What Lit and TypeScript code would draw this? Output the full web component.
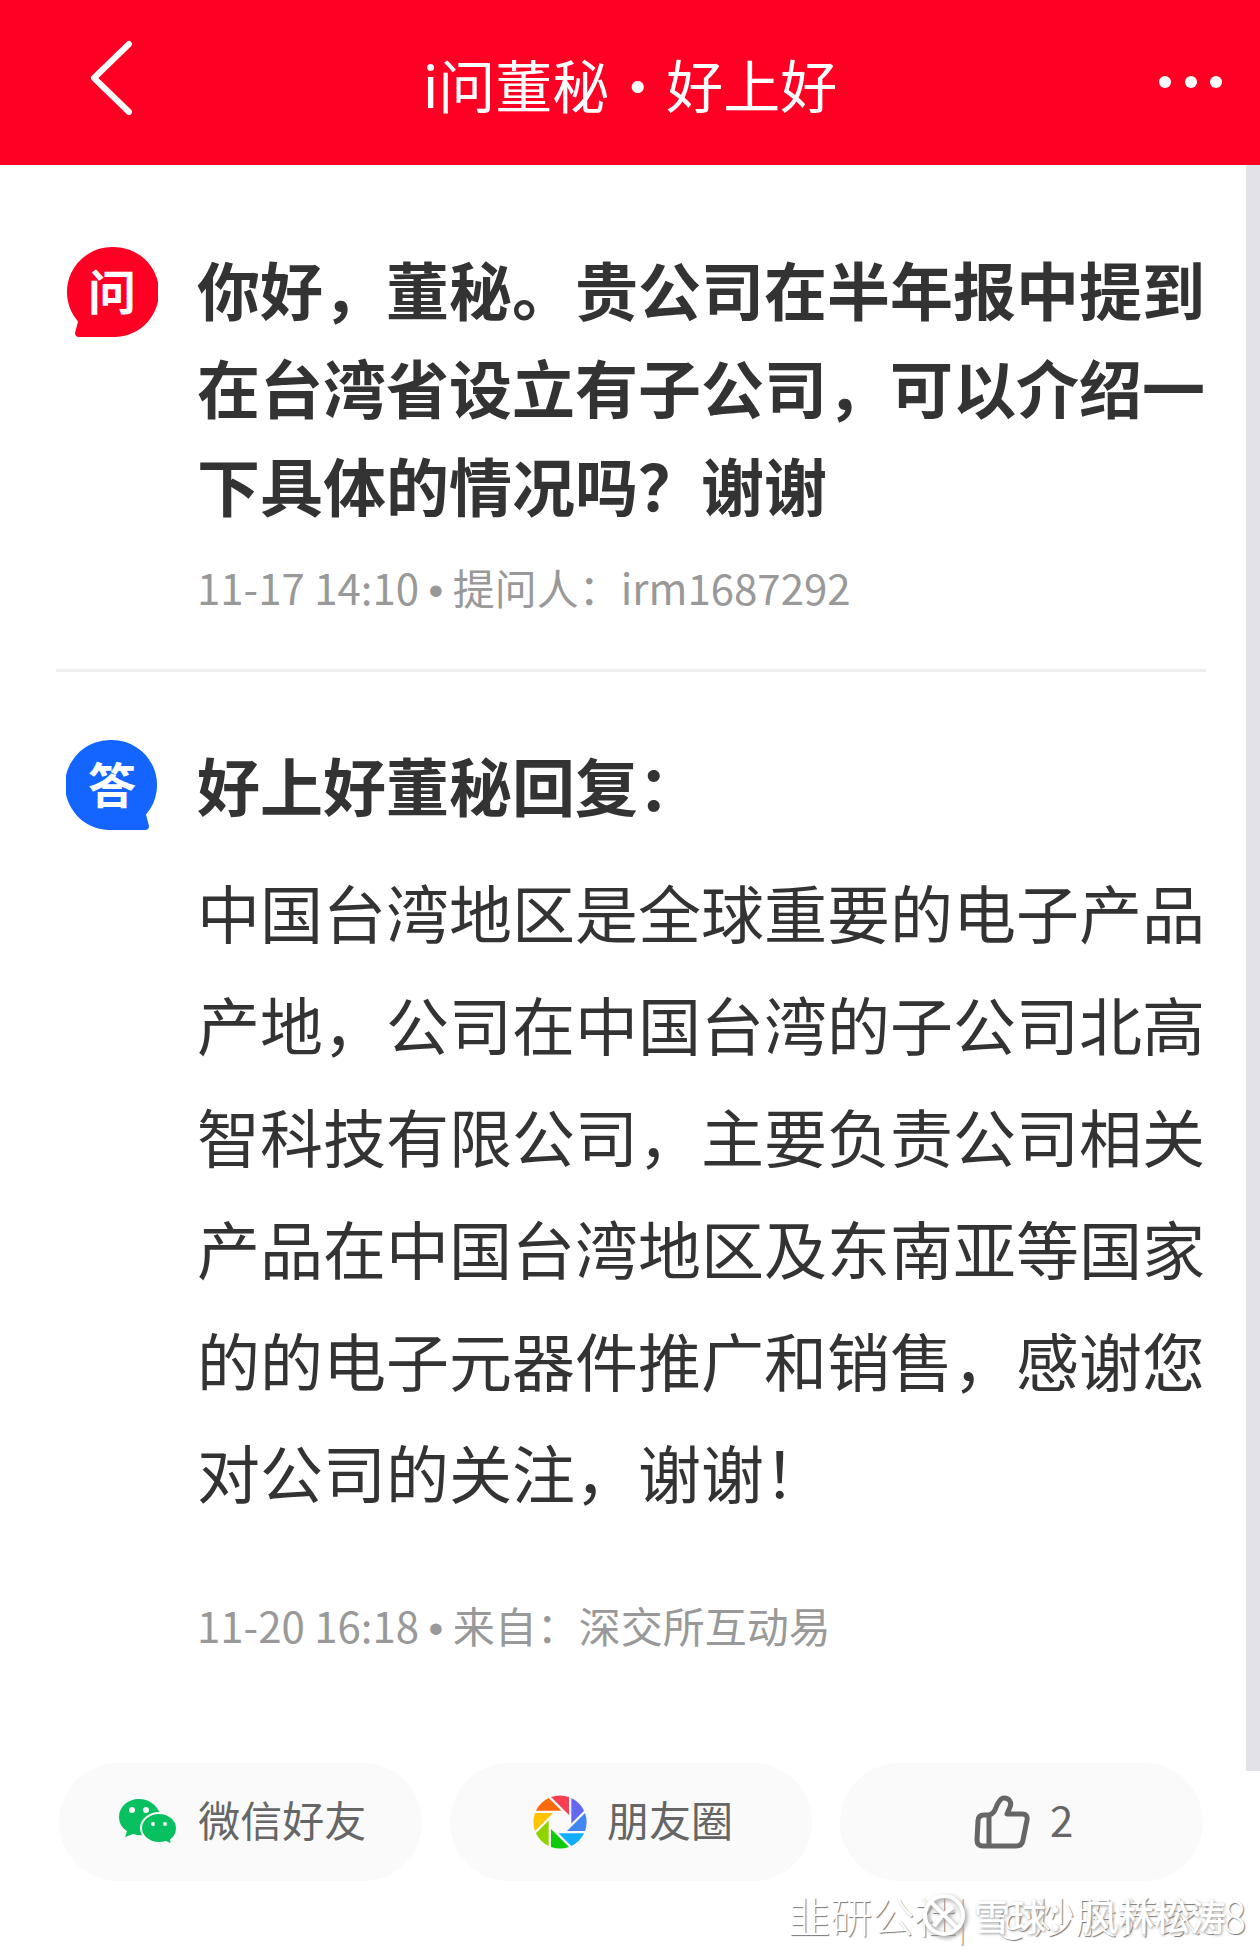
import { LitElement, html, css, svg } from "lit";
import { customElement } from "lit/decorators.js";

const PETALS = ["#fa3e54", "#6467f0", "#4285f4", "#10aeff", "#0bcb0b", "#91d300", "#ffc300", "#fa6a0a"];

@customElement("app-root")
export class AppRoot extends LitElement {
  static styles = css`
    :host {
      display: block;
      background: #fff;
      color: #333;
      font-family: "Noto Sans CJK SC", sans-serif;
    }
    * { box-sizing: border-box; }
    h1, h2, p { margin: 0; }
    svg { display: block; flex: none; }
    button {
      border: 0;
      padding: 0;
      background: none;
      font: inherit;
      color: inherit;
      cursor: pointer;
    }
    .bar {
      display: grid;
      grid-template-columns: 1fr auto 1fr;
      align-items: center;
      height: 165px;
      padding: 0 36px;
      background: #ff0024;
      color: #fff;
    }
    .bar h1 { font-size: 57px; font-weight: 400; line-height: 84px; }
    .back { justify-self: start; margin-left: 52px; padding-bottom: 10px; }
    .more { justify-self: end; padding-bottom: 2px; }
    .scroller { display: flex; align-items: stretch; }
    .thread { flex: 1; min-width: 0; padding: 74px 40px 0 56px; }
    .track { width: 14px; background: #e3e2e8; }
    .post { display: flex; gap: 39px; padding-left: 10px; }
    .badge {
      position: relative;
      flex: none;
      width: 92px;
      height: 92px;
      margin-top: 7px;
    }
    .badge span {
      position: absolute;
      inset: 0;
      text-align: center;
      font-size: 48px;
      font-weight: 700;
      line-height: 86px;
      color: #fff;
    }
    .content { flex: 1; min-width: 0; }
    .strong { font-size: 63px; font-weight: 700; line-height: 98px; }
    .meta { font-size: 42px; line-height: 64px; color: #999; }
    .dot { font-family: "Liberation Sans", sans-serif; line-height: 1; }
    .question { padding-bottom: 50px; border-bottom: 3px solid #eee; }
    .question .meta { margin-top: 22px; }
    .answer { padding: 60px 0 114px 10px; }
    .answer .strong { line-height: 104px; }
    .reply { margin-top: 19px; font-size: 63px; line-height: 112px; }
    .answer .meta { margin-top: 66px; }
    .actions {
      display: grid;
      grid-template-columns: repeat(3, 1fr);
      gap: 28px;
      padding: 0 57px 0 59px;
      margin-top: -8px;
    }
    .actions button {
      display: flex;
      align-items: center;
      justify-content: center;
      gap: 20px;
      height: 118px;
      padding-left: 4px;
      border-radius: 59px;
      background: #fafafa;
      color: #666;
      font-size: 42px;
      line-height: 64px;
    }
    .actions span { padding-bottom: 6px; }
    .marks {
      position: relative;
      height: 74px;
      color: #fff;
      font-size: 42px;
      line-height: 64px;
      white-space: nowrap;
      text-shadow: 1px 1px 1px #777;
    }
    .mark { position: absolute; top: 2px; right: 14px; font-weight: 300; }
    .brand {
      display: flex;
      align-items: center;
      gap: 8px;
      right: 34px;
      font-weight: 500;
      font-size: 36px;
      text-shadow: 1px 1px 3px #999;
    }
    .brand svg { filter: drop-shadow(2px 2px 2px #999); }
  `;

  private badge(label: string, color: string, flip: boolean) {
    return html`<div class="badge">
      <svg width="92" height="92" viewBox="0 0 92 92" aria-hidden="true">
        <path fill=${color} transform=${flip ? "translate(92 0) scale(-1 1)" : ""}
          d="M46 1A45 45 0 0 1 50 91H13Q9 91 9 87L12 75.500A45 45 0 0 1 46 1Z" />
      </svg>
      <span>${label}</span>
    </div>`;
  }

  render() {
    return html`
      <header class="bar">
        <button class="back" aria-label="返回">
          <svg width="46" height="76" viewBox="0 0 46 76" fill="none" stroke="#fff" stroke-width="6">
            <path d="M41 4 6 38l35 34" stroke-linecap="round" stroke-linejoin="round" />
          </svg>
        </button>
        <h1>i问董秘・好上好</h1>
        <button class="more" aria-label="更多">
          <svg width="66" height="14" viewBox="0 0 66 14" fill="#fff">
            <circle cx="7" cy="7" r="6" /><circle cx="33" cy="7" r="6" /><circle cx="58" cy="7" r="6" />
          </svg>
        </button>
      </header>
      <div class="scroller">
        <main class="thread">
          <section class="post question">
            ${this.badge("问", "#ff0024", false)}
            <div class="content">
              <h2 class="strong">你好，董秘。贵公司在半年报中提到在台湾省设立有子公司，可以介绍一下具体的情况吗？谢谢</h2>
              <p class="meta">11-17 14:10 <span class="dot">•</span> 提问人：irm1687292</p>
            </div>
          </section>
          <section class="post answer">
            ${this.badge("答", "#1464ff", true)}
            <div class="content">
              <h2 class="strong">好上好董秘回复：</h2>
              <p class="reply">中国台湾地区是全球重要的电子产品产地，公司在中国台湾的子公司北高智科技有限公司，主要负责公司相关产品在中国台湾地区及东南亚等国家的的电子元器件推广和销售，感谢您对公司的关注，谢谢！</p>
              <p class="meta">11-20 16:18 <span class="dot">•</span> 来自：深交所互动易</p>
            </div>
          </section>
        </main>
        <div class="track"></div>
      </div>
      <footer class="actions">
        <button>
          <svg width="60" height="48" viewBox="0 0 60 48">
            <path fill="#07c160" d="M21 1C9.500 1 1 9 1 19c0 6 3 11 8 14l-2 6 8-3q6 2 12 1L42 16C39 7 31 1 21 1Z" />
            <path fill="#07c160" stroke="#fafafa" stroke-width="2" d="M41 15c10 0 18 7 18 15 0 5-2 9-6 12l1 5-6-3q-3 1-7 1c-10 0-18-7-18-15s8-15 18-15Z" />
            <g fill="#fafafa"><circle cx="14" cy="12" r="3" /><circle cx="28" cy="12" r="3" /><circle cx="35" cy="26" r="2" /><circle cx="47" cy="26" r="2" /></g>
          </svg>
          <span>微信好友</span>
        </button>
        <button>
          <svg width="54" height="54" viewBox="-27 -27 54 54">
            ${PETALS.map((c, i) => svg`<path fill=${c} transform="rotate(${i * 45})" d="M-9-25A27 27 0 0 1 9-25V-7Z" />`)}
          </svg>
          <span>朋友圈</span>
        </button>
        <button>
          <svg width="56" height="54" viewBox="0 0 56 54" fill="none" stroke="#666" stroke-width="5" stroke-linejoin="round">
            <path d="M15 20c5-1 6-5 8-10 2-4 4-7 7-7 5 0 8 4 6 9l-3 7h15q6 0 5 6l-4 20q-1 6-7 6H9q-6 0-6-6l1-19q0-6 6-6ZM15 20v31" />
          </svg>
          <span>2</span>
        </button>
      </footer>
      <div class="marks">
        <span class="mark">韭研公社|&nbsp;&nbsp;&nbsp;@炒股养家98</span>
        <span class="mark brand">
          <svg width="44" height="44" viewBox="0 0 44 44" fill="none" stroke="#fff" stroke-width="4">
            <circle cx="22" cy="22" r="19" /><path d="M9 9l26 26M31 14 20 23l-8 10" />
          </svg>
          雪球：风林松涛
        </span>
      </div>
    `;
  }
}
